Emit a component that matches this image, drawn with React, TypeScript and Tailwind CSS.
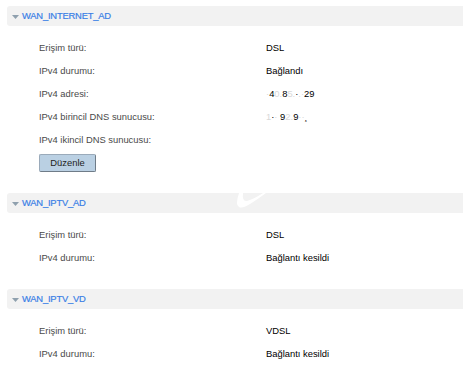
type Row = { label: string; value: React.ReactNode };

function Masked({ text }: { text: string }) {
  // masked address: most chars faded out like the screenshot
  return (
    <span>
      {text.split("").map((c, i) => (
        <span key={i} className={i % 3 === 1 || i === text.length - 1 ? "text-black" : "text-[#d8d8d8]"}>
          {c}
        </span>
      ))}
    </span>
  );
}

const sections: { title: string; rows: Row[]; edit?: boolean; after: string }[] = [
  {
    title: "WAN_INTERNET_AD",
    rows: [
      { label: "Erişim türü:", value: "DSL" },
      { label: "IPv4 durumu:", value: "Bağlandı" },
      { label: "IPv4 adresi:", value: <Masked text="·40.85.·.·29" /> },
      { label: "IPv4 birincil DNS sunucusu:", value: <Masked text="1·· 92.9··¸" /> },
      { label: "IPv4 ikincil DNS sunucusu:", value: "" },
    ],
    edit: true,
    after: "mb-[21px]",
  },
  {
    title: "WAN_IPTV_AD",
    rows: [
      { label: "Erişim türü:", value: "DSL" },
      { label: "IPv4 durumu:", value: "Bağlantı kesildi" },
    ],
    after: "mb-[19px]",
  },
  {
    title: "WAN_IPTV_VD",
    rows: [
      { label: "Erişim türü:", value: "VDSL" },
      { label: "IPv4 durumu:", value: "Bağlantı kesildi" },
    ],
    after: "",
  },
];

export default function App() {
  return (
    <div className="relative w-[463px] h-[384px] overflow-hidden bg-white pt-[6px] font-['Liberation_Sans',Arial,sans-serif]">
      {sections.map((s) => (
        <div key={s.title} className={s.after}>
          {/* section header bar */}
          <div className="ml-[7px] h-[20px] bg-[#f2f2f2] rounded-l-[3px] flex items-center pl-[5px]">
            <svg width="7" height="4" viewBox="0 0 7 4" className="mr-[3px] mt-[1px]">
              <path d="M0 0 L7 0 L3.5 4 Z" fill="#8fa0ae" />
            </svg>
            <span className="text-[9.4px] text-[#3a7fe6] tracking-[-0.2px] [-webkit-text-stroke:0.2px_#3a7fe6]">{s.title}</span>
          </div>

          <div className="pt-[11px]">
            {s.rows.map((r) => (
              <div key={r.label} className="h-[23px] flex items-center text-[9.4px]">
                <span className="ml-[39px] w-[227px] text-[#4a4a4a]">{r.label}</span>
                <span className="text-black">{r.value}</span>
              </div>
            ))}
          </div>

          {s.edit && (
            <button className="ml-[39px] mt-[2px] w-[57px] h-[18px] bg-[#bad0e3] border border-[#9aaaba] border-r-[#6f7c88] border-b-[#6f7c88] rounded-[2px] text-[9.4px] text-[#222] flex items-center justify-center">
              Düzenle
            </button>
          )}
        </div>
      ))}

      {/* faint watermark swoosh over the second header */}
      <svg className="absolute left-[230px] top-[186px]" width="40" height="26" viewBox="0 0 40 26">
        <path d="M9 7 Q5 19 9 21 Q12 23 20 18 Q28 13 36 7 L33 7 Q24 13 17 15 Q12 16 13 7 Z" fill="#ffffff" />
      </svg>
    </div>
  );
}
